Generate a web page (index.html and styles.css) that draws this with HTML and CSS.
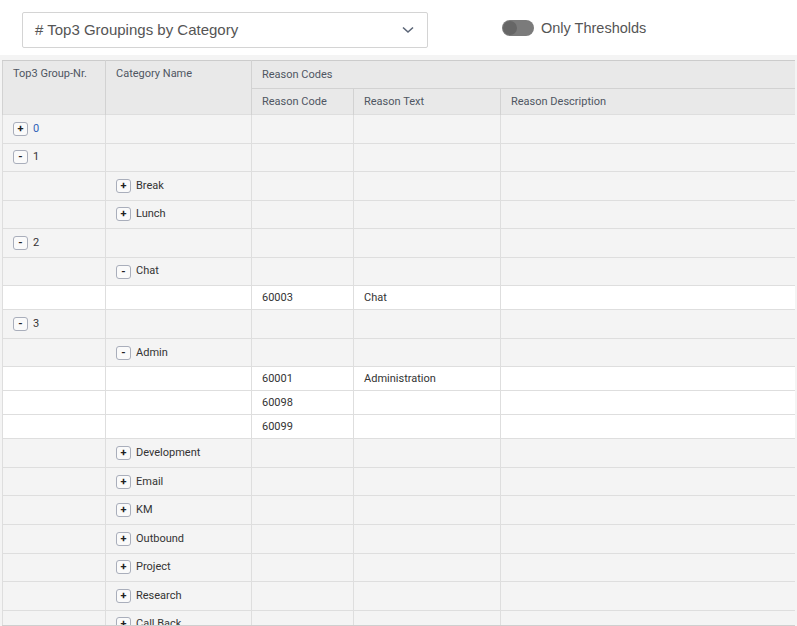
FILE: index.html
```html
<!DOCTYPE html>
<html>
<head>
<meta charset="utf-8">
<link rel="stylesheet" href="styles.css">
</head>
<body>
<div class="topbar">
  <div class="select">
    <span class="select-text"># Top3 Groupings by Category</span>
    <svg class="chev" width="12" height="8" viewBox="0 0 12 8"><path d="M1 1.5 L6 6 L11 1.5" fill="none" stroke="#5b6577" stroke-width="1.6"/></svg>
  </div>
  <div class="toggle-wrap">
    <span class="toggle"><span class="knob"></span></span>
    <span class="toggle-label">Only Thresholds</span>
  </div>
</div>
<div class="main">
  <div class="grid-wrap">
    <table class="grid">
      <colgroup>
        <col class="c1"><col class="c2"><col class="c3"><col class="c4"><col class="c5">
      </colgroup>
      <thead>
        <tr class="h1">
          <th rowspan="2" class="top">Top3 Group-Nr.</th>
          <th rowspan="2" class="top">Category Name</th>
          <th colspan="3">Reason Codes</th>
        </tr>
        <tr class="h2">
          <th>Reason Code</th>
          <th>Reason Text</th>
          <th>Reason Description</th>
        </tr>
      </thead>
      <tbody>
        <tr class="g"><td><span class="btn">+</span><span class="link">0</span></td><td></td><td></td><td></td><td></td></tr>
        <tr class="g"><td><span class="btn">-</span>1</td><td></td><td></td><td></td><td></td></tr>
        <tr class="g"><td></td><td><span class="btn">+</span>Break</td><td></td><td></td><td></td></tr>
        <tr class="g"><td></td><td><span class="btn">+</span>Lunch</td><td></td><td></td><td></td></tr>
        <tr class="g"><td><span class="btn">-</span>2</td><td></td><td></td><td></td><td></td></tr>
        <tr class="g"><td></td><td><span class="btn">-</span>Chat</td><td></td><td></td><td></td></tr>
        <tr class="w"><td></td><td></td><td>60003</td><td>Chat</td><td></td></tr>
        <tr class="g"><td><span class="btn">-</span>3</td><td></td><td></td><td></td><td></td></tr>
        <tr class="g"><td></td><td><span class="btn">-</span>Admin</td><td></td><td></td><td></td></tr>
        <tr class="w"><td></td><td></td><td>60001</td><td>Administration</td><td></td></tr>
        <tr class="w"><td></td><td></td><td>60098</td><td></td><td></td></tr>
        <tr class="w"><td></td><td></td><td>60099</td><td></td><td></td></tr>
        <tr class="g"><td></td><td><span class="btn">+</span>Development</td><td></td><td></td><td></td></tr>
        <tr class="g"><td></td><td><span class="btn">+</span>Email</td><td></td><td></td><td></td></tr>
        <tr class="g"><td></td><td><span class="btn">+</span>KM</td><td></td><td></td><td></td></tr>
        <tr class="g"><td></td><td><span class="btn">+</span>Outbound</td><td></td><td></td><td></td></tr>
        <tr class="g"><td></td><td><span class="btn">+</span>Project</td><td></td><td></td><td></td></tr>
        <tr class="g"><td></td><td><span class="btn">+</span>Research</td><td></td><td></td><td></td></tr>
        <tr class="g"><td></td><td><span class="btn">+</span>Call Back</td><td></td><td></td><td></td></tr>
      </tbody>
    </table>
  </div>
</div>
</body>
</html>
```

FILE: styles.css
```css
html, body {
  margin: 0;
  padding: 0;
  background: #f4f4f4;
  height: 100%;
  overflow: hidden;
}
body {
  font-family: "Liberation Sans", Arial, sans-serif;
}
.topbar {
  height: 55px;
  background: #fff;
  display: flex;
  align-items: flex-start;
  padding-left: 22px;
  box-sizing: border-box;
}
.select {
  margin-top: 12px;
  width: 406px;
  height: 36px;
  box-sizing: border-box;
  border: 1px solid #d4d4d4;
  border-radius: 2px;
  display: flex;
  align-items: center;
  justify-content: space-between;
  padding: 0 13px 0 12px;
}
.select-text {
  font-size: 15px;
  color: #555;
  margin-top: -1px;
}
.chev {
  display: block;
}
.toggle-wrap {
  margin-left: 74px;
  margin-top: 20px;
  display: flex;
  align-items: center;
  gap: 7px;
}
.toggle {
  width: 32px;
  height: 16px;
  border-radius: 8px;
  background: #7b7b7b;
  position: relative;
  display: block;
}
.knob {
  position: absolute;
  left: 1px;
  top: 1px;
  width: 14px;
  height: 14px;
  border-radius: 50%;
  background: #666;
}
.toggle-label {
  font-size: 14.5px;
  color: #555;
}
.main {
  padding: 5px 2px 0 2px;
}
.grid-wrap {
  width: 793px;
  height: 565px;
  overflow: hidden;
  border-bottom: 2px solid #cfcfcf;
}
.grid {
  border-collapse: collapse;
  table-layout: fixed;
  width: 793px;
  font-family: Roboto, "Liberation Sans", sans-serif;
  font-size: 11px;
  color: #333;
  border-left: 1px solid #cfcfcf;
  border-right: 1px solid #c8c8c8;
}
.c1 { width: 103px; }
.c2 { width: 146px; }
.c3 { width: 102px; }
.c4 { width: 147px; }
.c5 { width: 295px; }
.grid th {
  background: #e9e9e9;
  font-weight: normal;
  color: #4f5662;
  text-align: left;
  padding: 0 10px;
  border: 1px solid #d2d2d2;
  border-top: 1px solid #cccccc;
  white-space: nowrap;
}
.grid th.top {
  vertical-align: top;
  padding-top: 6px;
  border-bottom: 1px dotted #888;
}
.grid tr.h1 th { height: 26px; padding-bottom: 1px; }
.grid tr.h2 th { height: 25px; border-bottom: 1px dotted #888; }
.grid td {
  padding: 0 10px;
  border: 1px solid #dedede;
  white-space: nowrap;
  overflow: hidden;
}
.grid tr.g td {
  background: #f4f4f4;
  height: 27.55px;
}
.grid tr.w td {
  background: #fff;
  height: 23px;
}
.btn {
  display: inline-block;
  box-sizing: border-box;
  width: 15px;
  height: 14px;
  border: 1px solid #a9aebb;
  border-radius: 3px;
  background: #fafafa;
  text-align: center;
  font-size: 11px;
  line-height: 12px;
  font-weight: bold;
  color: #222;
  margin-right: 5px;
  vertical-align: middle;
}
.link {
  color: #2f62b8;
}
```
